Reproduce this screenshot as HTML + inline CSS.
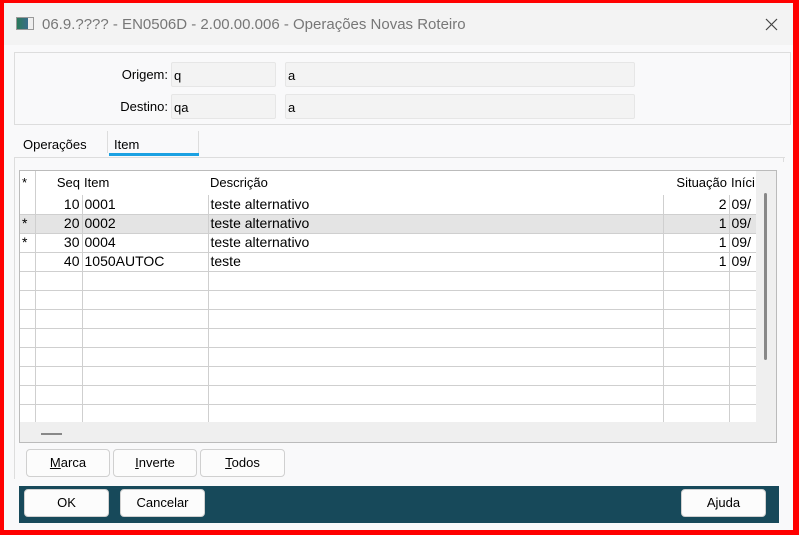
<!DOCTYPE html>
<html><head><meta charset="utf-8"><style>
*{box-sizing:border-box;margin:0;padding:0}
body{width:799px;height:535px;background:#f00;position:relative;overflow:hidden;font-family:"Liberation Sans",sans-serif;font-size:13px;color:#000}
.a{position:absolute}
.win{left:4px;top:3px;width:789px;height:527px;background:#f9f9fa}
.title{left:4px;top:3px;width:789px;height:42px;background:#f3f3f3}
.field{background:#f3f3f3;border:1px solid #e6e6e6;border-radius:2px;height:25px;padding:5px 0 0 2px;font-size:13px}
.lbl{font-size:13px;text-align:right}
table{border-collapse:collapse;table-layout:fixed;font-family:"Liberation Sans",sans-serif;font-size:14px}
td{height:19px;border-right:1px solid #cfcfcf;border-bottom:1px solid #cfcfcf;padding:0 2px;white-space:nowrap;overflow:hidden;line-height:17px}
tr.h td{height:23px;border-bottom:none;line-height:24px;font-size:13px}
.r{text-align:right}
.btn{background:#fcfcfc;border:1px solid #d0d0d0;border-radius:4px;height:28px;text-align:center;line-height:26px;font-size:13px}
</style></head><body>
<div class="a win"></div>
<div class="a title"></div>
<div class="a" style="left:16px;top:17px;width:18px;height:13px;border:1px solid #999;background:linear-gradient(90deg,#2a7a5a,#3a6c8c 70%,#eee 70%)"></div>
<div class="a" style="left:42px;top:16px;font-size:15px;color:#777">06.9.???? - EN0506D - 2.00.00.006 - Operações Novas Roteiro</div>
<svg class="a" style="left:765px;top:18px" width="13" height="13"><path d="M1 1L12 12M12 1L1 12" stroke="#444" stroke-width="1.2"/></svg>

<div class="a" style="left:14px;top:52px;width:777px;height:73px;border:1px solid #ddd;background:#f9f9fa"></div>
<div class="a lbl" style="left:100px;top:67px;width:68px">Origem:</div>
<div class="a field" style="left:171px;top:62px;width:105px">q</div>
<div class="a field" style="left:285px;top:62px;width:350px">a</div>
<div class="a lbl" style="left:100px;top:99px;width:68px">Destino:</div>
<div class="a field" style="left:171px;top:94px;width:105px">qa</div>
<div class="a field" style="left:285px;top:94px;width:350px">a</div>

<div class="a" style="left:23px;top:137px;font-size:13px">Operações</div>
<div class="a" style="left:107px;top:131px;width:1px;height:22px;background:#ddd"></div>
<div class="a" style="left:198px;top:131px;width:1px;height:22px;background:#ddd"></div>
<div class="a" style="left:114px;top:137px;font-size:13px">Item</div>
<div class="a" style="left:109px;top:153px;width:90px;height:3px;background:#1ba1e2"></div>
<div class="a" style="left:14px;top:157px;width:771px;height:322px;border-top:1px solid #ddd;border-left:1px solid #ddd"></div>
<div class="a" style="left:783px;top:157px;width:1px;height:5px;background:#ddd"></div>

<div class="a" style="left:19px;top:170px;width:758px;height:273px;border:1px solid #bbb;background:#efefef"></div>
<div class="a" style="left:20px;top:171px;width:736px;height:251px;background:#fff;overflow:hidden">
<table style="width:736px">
<colgroup><col style="width:15px"><col style="width:47px"><col style="width:126px"><col style="width:455px"><col style="width:66px"><col style="width:27px"></colgroup>
<tr class="h"><td style="border-right:1px solid #cfcfcf">*</td><td class="r" style="border-right:none">Seq</td><td style="border-right:none">Item</td><td style="border-right:none">Descrição</td><td class="r" style="border-right:none">Situação</td><td style="border-right:none">Iníci</td></tr>
<tr><td></td><td class="r">10</td><td>0001</td><td>teste alternativo</td><td class="r">2</td><td>09/</td></tr>
<tr style="background:#e4e4e4"><td>*</td><td class="r">20</td><td>0002</td><td>teste alternativo</td><td class="r">1</td><td>09/</td></tr>
<tr><td>*</td><td class="r">30</td><td>0004</td><td>teste alternativo</td><td class="r">1</td><td>09/</td></tr>
<tr><td></td><td class="r">40</td><td>1050AUTOC</td><td>teste</td><td class="r">1</td><td>09/</td></tr>
<tr><td></td><td></td><td></td><td></td><td></td><td></td></tr>
<tr><td></td><td></td><td></td><td></td><td></td><td></td></tr>
<tr><td></td><td></td><td></td><td></td><td></td><td></td></tr>
<tr><td></td><td></td><td></td><td></td><td></td><td></td></tr>
<tr><td></td><td></td><td></td><td></td><td></td><td></td></tr>
<tr><td></td><td></td><td></td><td></td><td></td><td></td></tr>
<tr><td></td><td></td><td></td><td></td><td></td><td></td></tr>
<tr><td></td><td></td><td></td><td></td><td></td><td></td></tr>
<tr><td></td><td></td><td></td><td></td><td></td><td></td></tr>
</table></div>
<div class="a" style="left:764px;top:193px;width:3px;height:167px;background:#888;border-radius:2px"></div>
<div class="a" style="left:41px;top:433px;width:21px;height:2px;background:#888"></div>

<div class="a btn" style="left:26px;top:449px;width:84px"><u>M</u>arca</div>
<div class="a btn" style="left:113px;top:449px;width:84px"><u>I</u>nverte</div>
<div class="a btn" style="left:200px;top:449px;width:85px"><u>T</u>odos</div>

<div class="a" style="left:19px;top:486px;width:760px;height:37px;background:#17495a"></div>
<div class="a btn" style="left:24px;top:489px;width:85px">OK</div>
<div class="a btn" style="left:120px;top:489px;width:85px">Cancelar</div>
<div class="a btn" style="left:681px;top:489px;width:85px">Ajuda</div>
</body></html>
